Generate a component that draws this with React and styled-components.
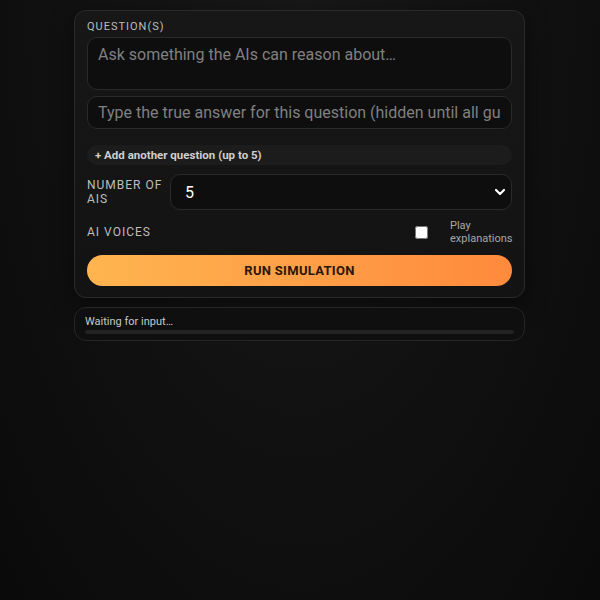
import React, { useState } from "react";
import styled, { createGlobalStyle } from "styled-components";

const GlobalStyle = createGlobalStyle`
  html, body {
    margin: 0;
    min-height: 100%;
  }
  body {
    background: radial-gradient(ellipse at 50% 0%, #181818 0%, #121212 45%, #0a0a0a 100%);
    background-color: #0b0b0b;
    font-family: Roboto, "Liberation Sans", Arial, sans-serif;
    color: #e6e6e6;
    min-height: 600px;
  }
`;

const Page = styled.main`
  display: flex;
  flex-direction: column;
  align-items: center;
  gap: 9px;
  padding: 10px 1px 0 0;
`;

const Card = styled.section`
  box-sizing: border-box;
  width: 451px;
  display: flex;
  flex-direction: column;
  padding: 9px 12px 11px 12px;
  background: linear-gradient(180deg, #171717 0%, #131313 100%);
  border: 1px solid #2a2a2a;
  border-radius: 12px;
  box-shadow: 0 8px 24px rgba(0, 0, 0, 0.45);
`;

const Label = styled.label`
  font-size: 11px;
  line-height: 14px;
  letter-spacing: 1px;
  text-transform: uppercase;
  color: #bdbdbd;
`;

const fieldBase = `
  box-sizing: border-box;
  width: 100%;
  background: #0e0e0e;
  border: 1px solid #2a2a2a;
  border-radius: 10px;
  color: #eaeaea;
  font-family: Roboto, "Liberation Sans", Arial, sans-serif;
  font-size: 16px;
  outline: none;
  &::placeholder {
    color: #808080;
  }
`;

const TextArea = styled.textarea`
  ${fieldBase}
  display: block;
  margin-top: 3px;
  height: 53px;
  padding: 7px 10px;
  resize: none;
  line-height: 20px;
`;

const TextInput = styled.input`
  ${fieldBase}
  margin-top: 6px;
  height: 33px;
  padding: 0 10px;
`;

const AddButton = styled.button`
  margin-top: 16px;
  height: 20px;
  padding: 0 8px;
  text-align: left;
  background: #1c1c1c;
  border: none;
  border-radius: 10px;
  color: #cfcfcf;
  font-family: Roboto, "Liberation Sans", Arial, sans-serif;
  font-size: 11.5px;
  font-weight: 700;
  cursor: pointer;
`;

const Row = styled.div`
  display: flex;
  align-items: center;
  gap: ${(p) => p.$gap || 0}px;
  margin-top: ${(p) => p.$top || 0}px;
`;

const RowLabel = styled(Label)`
  flex: 0 0 ${(p) => p.$width || 76}px;
  font-size: 12px;
  line-height: 14px;
`;

const SelectWrap = styled.div`
  position: relative;
  flex: 1;
`;

const Select = styled.select`
  ${fieldBase}
  appearance: none;
  height: 36px;
  padding: 0 14px;
  color: #ffffff;
`;

const Chevron = styled.svg`
  position: absolute;
  right: 4px;
  top: 50%;
  transform: translateY(-50%);
  pointer-events: none;
`;

const Toggle = styled.label`
  margin-left: auto;
  display: flex;
  align-items: center;
  gap: 22px;
  font-size: 11px;
  line-height: 13px;
  color: #a8a8a8;
  cursor: pointer;
  input {
    margin: 0;
    width: 13px;
    height: 13px;
  }
  span {
    width: 62px;
  }
`;

const RunButton = styled.button`
  margin-top: 10px;
  height: 31px;
  border: none;
  border-radius: 16px;
  background: linear-gradient(90deg, #ffb54f 0%, #ff9f47 50%, #ff8a3d 100%);
  color: #2a1606;
  font-family: Roboto, "Liberation Sans", Arial, sans-serif;
  font-size: 13px;
  font-weight: 700;
  letter-spacing: 0.3px;
  cursor: pointer;
`;

const Status = styled.section`
  box-sizing: border-box;
  width: 451px;
  padding: 7px 10px 6px;
  background: #0f0f0f;
  border: 1px solid #262626;
  border-radius: 12px;
`;

const StatusText = styled.div`
  font-size: 11px;
  line-height: 14px;
  color: #c8c8c8;
  margin-bottom: 1px;
`;

const Track = styled.div`
  height: 4px;
  border-radius: 2px;
  background: #222222;
  overflow: hidden;
`;

const Fill = styled.div`
  height: 100%;
  background: #ff9f47;
`;

export default function App() {
  const [count, setCount] = useState("5");
  const [voices, setVoices] = useState(false);
  const progress = 0;

  return (
    <>
      <GlobalStyle />
      <Page>
        <Card>
          <Label>Question(s)</Label>
          <TextArea placeholder="Ask something the AIs can reason about…" />
          <TextInput placeholder="Type the true answer for this question (hidden until all guesses are in)" />
          <AddButton>+ Add another question (up to 5)</AddButton>
          <Row $top={9} $gap={6}>
            <RowLabel $width={77}>Number of AIs</RowLabel>
            <SelectWrap>
              <Select value={count} onChange={(e) => setCount(e.target.value)}>
                {[2, 3, 4, 5, 6, 7, 8].map((n) => (
                  <option key={n} value={n}>
                    {n}
                  </option>
                ))}
              </Select>
              <Chevron width="16" height="16" viewBox="0 0 16 16">
                <path
                  d="M4 6l4 4 4-4"
                  fill="none"
                  stroke="#ffffff"
                  strokeWidth="2.2"
                  strokeLinecap="round"
                  strokeLinejoin="round"
                />
              </Chevron>
            </SelectWrap>
          </Row>
          <Row $top={9}>
            <RowLabel $width={120}>AI Voices</RowLabel>
            <Toggle>
              <input
                type="checkbox"
                checked={voices}
                onChange={(e) => setVoices(e.target.checked)}
              />
              <span>Play explanations</span>
            </Toggle>
          </Row>
          <RunButton>RUN SIMULATION</RunButton>
        </Card>
        <Status>
          <StatusText>Waiting for input…</StatusText>
          <Track>
            <Fill style={{ width: `${progress}%` }} />
          </Track>
        </Status>
      </Page>
    </>
  );
}
